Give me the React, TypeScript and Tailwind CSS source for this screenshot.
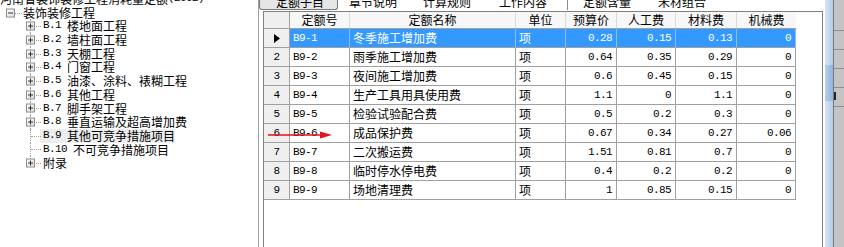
import React from "react"

const cjk = "font-['Noto_Sans_CJK_SC','Noto_Sans',sans-serif]"
const mono = "font-['Liberation_Mono','DejaVu_Sans_Mono',monospace] text-[11px] tracking-[-0.6px]"

const rows = [
  ["B9-1", "冬季施工增加费", "项", "0.28", "0.15", "0.13", "0"],
  ["B9-2", "雨季施工增加费", "项", "0.64", "0.35", "0.29", "0"],
  ["B9-3", "夜间施工增加费", "项", "0.6", "0.45", "0.15", "0"],
  ["B9-4", "生产工具用具使用费", "项", "1.1", "0", "1.1", "0"],
  ["B9-5", "检验试验配合费", "项", "0.5", "0.2", "0.3", "0"],
  ["B9-6", "成品保护费", "项", "0.67", "0.34", "0.27", "0.06"],
  ["B9-7", "二次搬运费", "项", "1.51", "0.81", "0.7", "0"],
  ["B9-8", "临时停水停电费", "项", "0.4", "0.2", "0.2", "0"],
  ["B9-9", "场地清理费", "项", "1", "0.85", "0.15", "0"],
]

const treeItems = [
  { code: "B.1", name: "楼地面工程", kids: true },
  { code: "B.2", name: "墙柱面工程", kids: true },
  { code: "B.3", name: "天棚工程", kids: true },
  { code: "B.4", name: "门窗工程", kids: true },
  { code: "B.5", name: "油漆、涂料、裱糊工程", kids: true },
  { code: "B.6", name: "其他工程", kids: true },
  { code: "B.7", name: "脚手架工程", kids: true },
  { code: "B.8", name: "垂直运输及超高增加费", kids: true },
  { code: "B.9", name: "其他可竞争措施项目", kids: false, active: true },
  { code: "B.10", name: "不可竞争措施项目", kids: false },
  { code: "", name: "附录", kids: true },
]

function ExpandBox({ minus }: { minus?: boolean }) {
  return (
    <span className="relative block h-[9px] w-[9px] border border-[#8c8c8c] bg-gradient-to-br from-white to-[#dcdcdc]">
      <span className="absolute left-[1px] top-[3px] h-[1px] w-[5px] bg-[#333]" />
      {!minus && <span className="absolute left-[3px] top-[1px] h-[5px] w-[1px] bg-[#333]" />}
    </span>
  )
}

function Tree() {
  return (
    <div className={`w-[258px] shrink-0 overflow-hidden text-[12px] text-black ${cjk}`}>
      <div className="-mt-[8px]">
        <div className="flex h-[13.7px] items-center whitespace-nowrap leading-[13.7px]">
          河南省装饰装修工程消耗量定额<span className={mono}>(2002)</span>
        </div>
        <div className="relative flex h-[13.7px] items-center leading-[13.7px]">
          <span className="absolute left-[6px] top-1/2 -translate-y-1/2">
            <ExpandBox minus />
          </span>
          <span className="absolute left-[15px] top-1/2 w-[7px] border-t border-dotted border-[#a0a0a0]" />
          <span className="ml-[23px] whitespace-nowrap">装饰装修工程</span>
        </div>
        {treeItems.map((it, i) => {
          const last = i === treeItems.length - 1
          return (
            <div key={i} className="relative flex h-[13.7px] items-center leading-[13.7px]">
              <span
                className={`absolute left-[30px] top-0 w-0 border-l border-dotted border-[#a0a0a0] ${last ? "h-1/2" : "h-full"}`}
              />
              <span className="absolute left-[31px] top-1/2 w-[10px] border-t border-dotted border-[#a0a0a0]" />
              {it.kids && (
                <span className="absolute left-[26px] top-1/2 -translate-y-1/2">
                  <ExpandBox />
                </span>
              )}
              <span
                className={`ml-[43px] flex items-center whitespace-nowrap ${it.active ? "-ml-[3px] bg-[#ededed] pl-[3px]" : ""}`}
                style={it.active ? { marginLeft: 40 } : undefined}
              >
                {it.code && <span className={`${mono} whitespace-pre`}>{it.code + " "}</span>}
                {it.name}
              </span>
            </div>
          )
        })}
      </div>
    </div>
  )
}

function Tabs() {
  return (
    <div className={`flex h-[11px] shrink-0 overflow-hidden text-[12px] text-black ${cjk}`}>
      <div className="flex h-[10px] w-[79px] rounded-b-[3px] border-x border-b border-[#7a7a7a] bg-[#e6e6e6] pl-[16px]">
        <span className="-mt-[4px] block leading-[12px]">定额子目</span>
      </div>
      <span className="-mt-[4px] ml-[11px] block leading-[12px]">章节说明</span>
      <span className="-mt-[4px] ml-[26px] block leading-[12px]">计算规则</span>
      <span className="-mt-[4px] ml-[28px] block leading-[12px]">工作内容</span>
      <span className="ml-[20px] h-[10px] w-[1px] bg-[#8a8a8a]" />
      <span className="-mt-[4px] ml-[15px] block leading-[12px]">定额含量</span>
      <span className="-mt-[4px] ml-[27px] block leading-[12px]">未材组合</span>
    </div>
  )
}

const widths = ["w-[26px]", "w-[60px]", "w-[166px]", "w-[50px]", "w-[51px]", "w-[59px]", "w-[61px]", "w-[59px]"]
const heads = ["", "定额号", "定额名称", "单位", "预算价", "人工费", "材料费", "机械费"]

function Grid() {
  return (
    <div className="w-[532px] text-[12px] text-black">
      <div className={`flex h-[17px] border-b border-[#a0a0a0] bg-[#f7f7f7] ${cjk}`}>
        {heads.map((h, i) => (
          <div
            key={i}
            className={`${widths[i]} flex shrink-0 items-center justify-center border-r leading-[16px] ${
              i === 0 ? "border-[#a0a0a0] bg-[#efefef]" : "border-[#dadada]"
            } ${i === 7 ? "border-r-0" : ""}`}
          >
            {h}
          </div>
        ))}
      </div>
      {rows.map((r, ri) => {
        const sel = ri === 0
        const cell = `flex shrink-0 items-center border-r ${sel ? "border-[#8cc0f5] bg-[#3399ff] text-white" : "border-[#a0a0a0]"}`
        return (
          <div key={ri} className="flex h-[19px] border-b border-[#a0a0a0]">
            <div className={`${widths[0]} flex shrink-0 items-center justify-center border-r border-[#a0a0a0] bg-[#efefef]`}>
              {sel ? (
                <svg width="6" height="9" viewBox="0 0 6 9">
                  <path d="M0 0 L6 4.5 L0 9 Z" fill="#000" />
                </svg>
              ) : (
                <span className={mono}>{ri + 1}</span>
              )}
            </div>
            <div className={`${widths[1]} ${cell} pl-[3px]`}>
              <span className={mono}>{r[0]}</span>
            </div>
            <div className={`${widths[2]} ${cell} pl-[3px] ${cjk}`}>{r[1]}</div>
            <div className={`${widths[3]} ${cell} pl-[3px] ${cjk}`}>{r[2]}</div>
            {r.slice(3).map((v, vi) => (
              <div key={vi} className={`${widths[4 + vi]} ${cell} justify-end pr-[4px]`}>
                <span className={mono}>{v}</span>
              </div>
            ))}
          </div>
        )
      })}
    </div>
  )
}

export default function App() {
  return (
    <div className="relative flex h-[247px] w-[844px] overflow-hidden bg-white">
      <Tree />
      <div className="flex w-[565px] shrink-0 flex-col border-l border-[#a0a0a0]">
        <Tabs />
        <div className="ml-[4px] flex-1 border-l border-r border-t border-[#808080]">
          <Grid />
        </div>
      </div>
      <div className="w-[2px] shrink-0 bg-white" />
      <div className="flex w-[8px] shrink-0 flex-col bg-gradient-to-r from-[#d6e3f2] to-[#b3cbe8]">
        <div className="mt-[65px] h-[36px] bg-gradient-to-r from-[#b8cfec] to-[#8fb3e0]" />
      </div>
      <div className="relative w-[11px] shrink-0 border-l border-[#7a7a7a] bg-[#c4c4c4]">
        <div className="h-[31px] border-b border-[#8e8e8e]" />
        <div className="h-[19px] border-b border-[#8e8e8e]" />
        <div className="h-[19px] border-b border-[#8e8e8e]" />
        <div className="h-[19px] border-b border-[#8e8e8e]" />
        <div className="h-[19px] border-b border-[#8e8e8e]" />
        <span className="absolute left-[0px] top-[92px] h-[8px] w-[2px] bg-[#222]" />
      </div>
      {/* red annotation arrow */}
      <svg className="absolute left-[268px] top-[130px]" width="66" height="10" viewBox="0 0 66 10">
        <line x1="0" y1="5" x2="54" y2="5" stroke="#e3131b" strokeWidth="1.4" />
        <path d="M52 1.5 L64 5 L52 8.5 Z" fill="#e3131b" />
      </svg>
    </div>
  )
}
